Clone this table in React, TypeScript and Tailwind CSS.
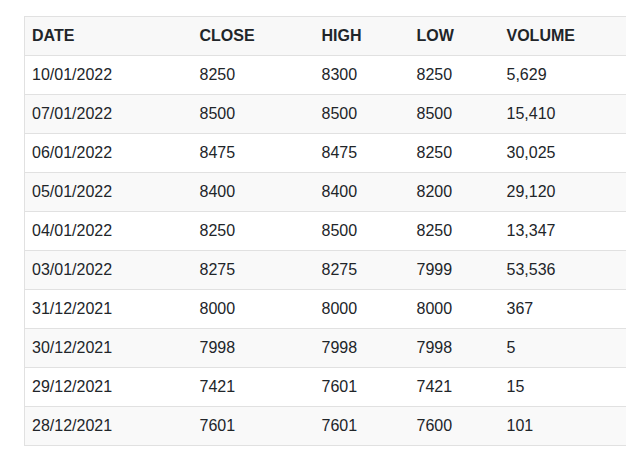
const rows = [
  ['10/01/2022', '8250', '8300', '8250', '5,629'],
  ['07/01/2022', '8500', '8500', '8500', '15,410'],
  ['06/01/2022', '8475', '8475', '8250', '30,025'],
  ['05/01/2022', '8400', '8400', '8200', '29,120'],
  ['04/01/2022', '8250', '8500', '8250', '13,347'],
  ['03/01/2022', '8275', '8275', '7999', '53,536'],
  ['31/12/2021', '8000', '8000', '8000', '367'],
  ['30/12/2021', '7998', '7998', '7998', '5'],
  ['29/12/2021', '7421', '7601', '7421', '15'],
  ['28/12/2021', '7601', '7601', '7600', '101'],
];

const widths = ['w-[168px]', 'w-[122px]', 'w-[95px]', 'w-[90px]', 'w-[127px]'];

export default function App() {
  return (
    <div className="bg-white pl-6 pt-4 h-[467px] overflow-hidden font-['Liberation_Sans',Arial,sans-serif] text-[16px] text-[#212529]">
      <table className="w-[602px] table-fixed border-collapse border-l border-t border-b border-[#e1e1e1]">
        <colgroup>
          {widths.map((w, i) => (
            <col key={i} className={w} />
          ))}
        </colgroup>
        <thead>
          <tr className="bg-[#f8f8f8]">
            {['DATE', 'CLOSE', 'HIGH', 'LOW', 'VOLUME'].map((h) => (
              <th key={h} className="pl-[7px] pr-2 py-[7px] text-left font-bold leading-6 border-b border-[#e1e1e1]">
                {h}
              </th>
            ))}
          </tr>
        </thead>
        <tbody>
          {rows.map((r, i) => (
            <tr key={i} className={i % 2 === 1 ? 'bg-[#f9f9f9]' : 'bg-white'}>
              {r.map((c, j) => (
                <td key={j} className="pl-[7px] pr-2 py-[7px] leading-6 border-b border-[#e1e1e1]">
                  {c}
                </td>
              ))}
            </tr>
          ))}
        </tbody>
      </table>
    </div>
  );
}
